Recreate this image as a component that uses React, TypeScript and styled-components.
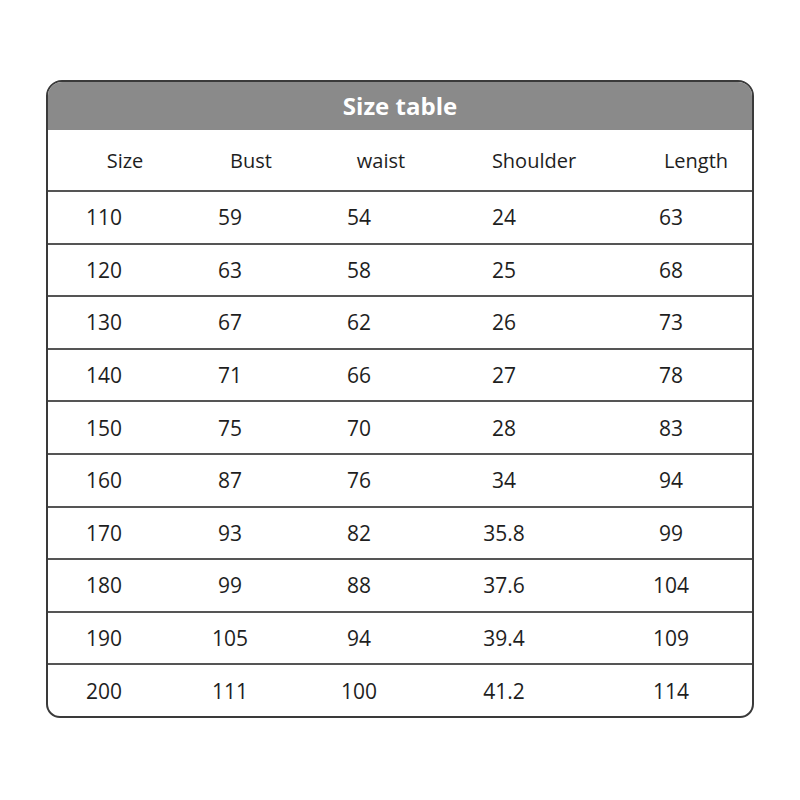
import styled, { createGlobalStyle } from "styled-components";

const GlobalStyle = createGlobalStyle`
    html, body {
        margin: 0;
        padding: 0;
        background: #ffffff;
    }
    body {
        font-family: "Open Sans", "Noto Sans", "Liberation Sans", sans-serif;
    }
`;

// column widths chosen so the cell centres sit where the picture has them
const COLUMNS = "112px 140px 118px 172px 1fr";

const HEADERS: { label: string; shift: number }[] = [
    { label: "Size", shift: 21 },
    { label: "Bust", shift: 21 },
    { label: "waist", shift: 22 },
    { label: "Shoulder", shift: 30 },
    { label: "Length", shift: 25 },
];

const ROWS: string[][] = [
    ["110", "59", "54", "24", "63"],
    ["120", "63", "58", "25", "68"],
    ["130", "67", "62", "26", "73"],
    ["140", "71", "66", "27", "78"],
    ["150", "75", "70", "28", "83"],
    ["160", "87", "76", "34", "94"],
    ["170", "93", "82", "35.8", "99"],
    ["180", "99", "88", "37.6", "104"],
    ["190", "105", "94", "39.4", "109"],
    ["200", "111", "100", "41.2", "114"],
];

export default function App() {
    return (
        <Page>
            <GlobalStyle />
            <Table>
                <Title>Size table</Title>
                <HeaderRow>
                    {HEADERS.map((h) => (
                        <HeaderCell key={h.label} $shift={h.shift}>
                            {h.label}
                        </HeaderCell>
                    ))}
                </HeaderRow>
                {ROWS.map((row, i) => (
                    <Row key={row[0]} $last={i === ROWS.length - 1}>
                        {row.map((value, j) => (
                            <Cell key={j}>{value}</Cell>
                        ))}
                    </Row>
                ))}
            </Table>
        </Page>
    );
}

const Page = styled.div`
    width: 800px;
    height: 800px;
    padding: 80px 46px 0 46px;
    box-sizing: border-box;
`;

const Table = styled.div`
    width: 708px;
    height: 638px;
    box-sizing: border-box;
    border: 2px solid #3a3a3a;
    border-radius: 16px 16px 14px 14px;
    overflow: hidden;
    display: flex;
    flex-direction: column;
    color: #1e1e1e;
`;

const Title = styled.div`
    height: 48px;
    flex: none;
    background: #8a8a8a;
    color: #ffffff;
    font-weight: 700;
    font-size: 24px;
    display: flex;
    align-items: center;
    justify-content: center;
    padding-bottom: 2px;
    box-sizing: border-box;
`;

const HeaderRow = styled.div`
    height: 60px;
    flex: none;
    display: grid;
    grid-template-columns: ${COLUMNS};
    align-items: center;
    border-bottom: 2px solid #555555;
    font-size: 20px;
`;

const HeaderCell = styled.div<{ $shift: number }>`
    text-align: center;
    padding-left: ${(p) => p.$shift * 2}px;
    white-space: nowrap;
`;

const Row = styled.div<{ $last: boolean }>`
    flex: 1;
    display: grid;
    grid-template-columns: ${COLUMNS};
    align-items: center;
    border-bottom: ${(p) => (p.$last ? "none" : "2px solid #555555")};
    font-size: 21px;
`;

const Cell = styled.div`
    text-align: center;
    white-space: nowrap;
`;
